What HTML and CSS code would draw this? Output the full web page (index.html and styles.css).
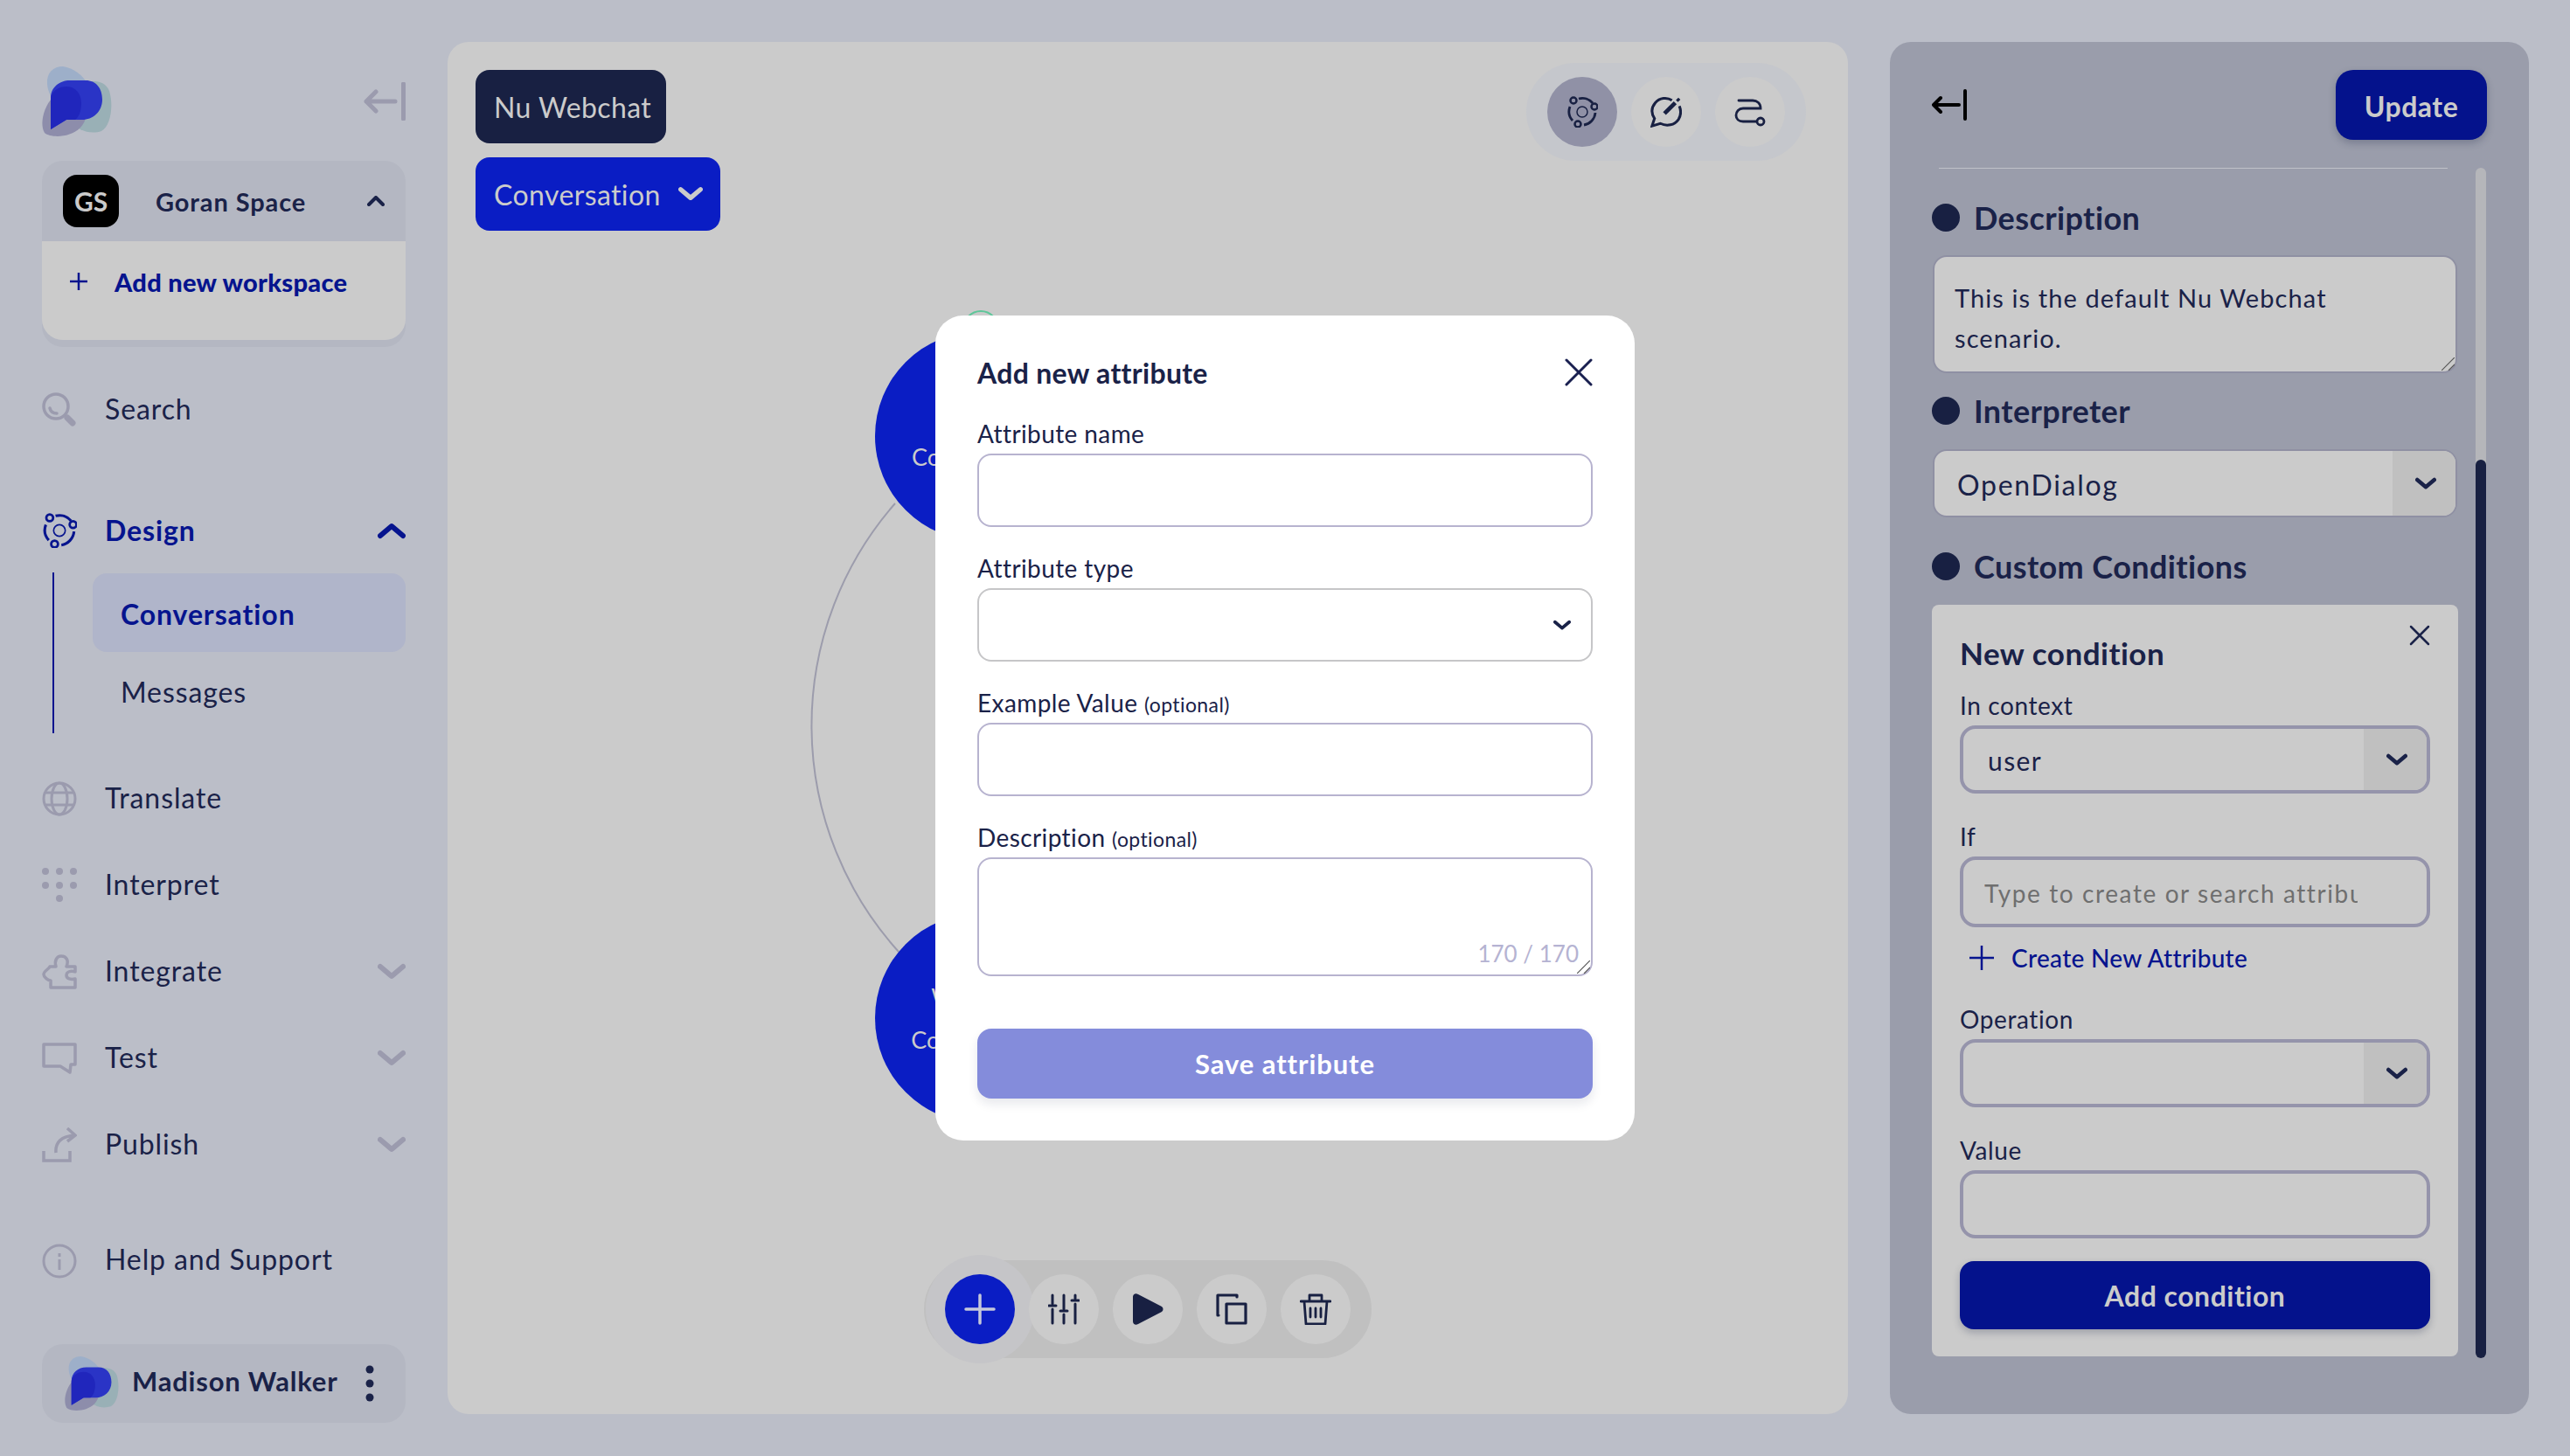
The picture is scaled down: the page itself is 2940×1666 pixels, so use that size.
FILE: index.html
```html
<!doctype html>
<html lang="en">
<head>
    <meta charset="utf-8">
    <meta name="viewport" content="width=device-width, initial-scale=1">
    <title>Nu Webchat - Conversation</title>
    <link rel="stylesheet" href="styles.css">
</head>
<body>
    <svg class="defs" width="0" height="0" aria-hidden="true">
        <symbol id="logo" viewBox="0 0 80 80">
            <path fill="#9dafc9" d="M6 20C5 7 13 0 24 0C36 2 47 10 52 20C58 34 40 44 26 44C14 44 7 32 6 20Z"/>
            <path fill="#99b0b6" d="M48 18C60 16 72 16 77 28C82 44 79 68 68 74C56 78 40 74 34 62C28 46 36 22 48 18Z"/>
            <path fill="#8d8dab" d="M12 36C22 26 38 24 46 34C54 46 52 62 44 70C32 82 10 82 3 76C-3 66 2 46 12 36Z"/>
            <path fill="#2a34c6" d="M10 72V36C10 24 20 16 32 16H50C62 16 69 25 69 38C69 52 58 61 46 61H28Z"/>
            <path fill="#2026bc" d="M10 72V36C12 27 20 23 28 23C39 23 45 32 45 42C45 52 42 58 38 61H28Z"/>
        </symbol>
        <symbol id="orbit" viewBox="0 0 36 36">
            <g fill="none" stroke="currentColor">
                <circle cx="18" cy="18" r="6" stroke-width="1.5"/>
                <path stroke-width="2.8" d="M4 12A15.500 15.500 0 0 0 7 28M14 3A15.500 15.500 0 0 1 30 8M33 19A15.500 15.500 0 0 1 20 33"/>
                <circle cx="8" cy="5" r="3.500" stroke-width="2.500"/>
                <circle cx="32" cy="12" r="3.500" stroke-width="2.500"/>
                <circle cx="13" cy="32" r="3.500" stroke-width="2.500"/>
            </g>
        </symbol>
        <symbol id="chevron" viewBox="0 0 32 20">
            <path fill="none" stroke="currentColor" stroke-width="6" stroke-linecap="round" stroke-linejoin="round" d="M3 4L16 15L29 4"/>
        </symbol>
        <symbol id="grip" viewBox="0 0 15 15">
            <path fill="none" stroke="#555" stroke-width="1.200" d="M0 15L15 0M8 15L15 8"/>
        </symbol>
    </svg>

    <aside class="sidebar">
        <div class="brand-row">
            <svg class="brand-logo"><use href="#logo"/></svg>
            <svg class="collapse-icon" viewBox="0 0 48 44" fill="none" stroke="currentColor" stroke-width="5" stroke-linecap="round" stroke-linejoin="round">
                <path d="M36 22H3M14 11L3 22L14 33M45.500 2V42"/>
            </svg>
        </div>

        <div class="workspace">
            <div class="workspace-head">
                <span class="workspace-badge">GS</span>
                <span class="workspace-name">Goran Space</span>
                <svg class="workspace-chevron" viewBox="0 0 20 12" fill="none" stroke="currentColor" stroke-width="4" stroke-linecap="round" stroke-linejoin="round"><path d="M2 10L10 2L18 10"/></svg>
            </div>
            <div class="workspace-body">
                <svg class="workspace-plus" viewBox="0 0 20 20" stroke="currentColor" stroke-width="2.500"><path d="M0 10H20M10 0V20"/></svg>
                <span>Add new workspace</span>
            </div>
        </div>

        <nav class="nav">
            <a class="nav-row nav-search">
                <svg class="nav-icon" viewBox="0 0 40 40" fill="none" stroke="currentColor" stroke-width="3.500" stroke-linecap="round">
                    <circle cx="16" cy="16" r="14"/>
                    <path d="M9 18C10 22 13 24 17 24"/>
                    <path stroke-width="7" d="M29 29L35 35"/>
                </svg>
                <span>Search</span>
            </a>

            <a class="nav-row nav-design">
                <svg class="nav-icon"><use href="#orbit"/></svg>
                <span>Design</span>
                <svg class="nav-chevron flip"><use href="#chevron"/></svg>
            </a>
            <div class="subnav">
                <a class="subnav-item is-active">Conversation</a>
                <a class="subnav-item">Messages</a>
            </div>

            <a class="nav-row nav-translate">
                <svg class="nav-icon" viewBox="0 0 40 40" fill="none" stroke="currentColor" stroke-width="3">
                    <circle cx="20" cy="20" r="18"/>
                    <ellipse cx="20" cy="20" rx="9" ry="18"/>
                    <path d="M3 13H37M3 27H37"/>
                </svg>
                <span>Translate</span>
            </a>
            <a class="nav-row">
                <svg class="nav-icon" viewBox="0 0 40 40" fill="currentColor">
                    <circle cx="4" cy="4" r="4"/><circle cx="20" cy="4" r="4"/><circle cx="36" cy="4" r="4"/>
                    <circle cx="4" cy="20" r="4"/><circle cx="20" cy="20" r="4"/><circle cx="36" cy="20" r="4"/>
                    <circle cx="20" cy="35" r="4"/>
                </svg>
                <span>Interpret</span>
            </a>
            <a class="nav-row">
                <svg class="nav-icon" viewBox="0 0 40 40" fill="none" stroke="currentColor" stroke-width="3.500" stroke-linejoin="round">
                    <path d="M9 14H16C14 7 17 2 22 2C28 2 31 7 28 14H38V20C33 18 28 20 28 24C28 28 33 29 38 28V38H10V30C7 30 2 26 2 23C2 19 8 17 9 14Z"/>
                </svg>
                <span>Integrate</span>
                <svg class="nav-chevron"><use href="#chevron"/></svg>
            </a>
            <a class="nav-row">
                <svg class="nav-icon" viewBox="0 0 40 40" fill="none" stroke="currentColor" stroke-width="3.500" stroke-linejoin="round">
                    <path d="M2 4H38V27H33L32 36L21 29H2Z"/>
                </svg>
                <span>Test</span>
                <svg class="nav-chevron"><use href="#chevron"/></svg>
            </a>
            <a class="nav-row">
                <svg class="nav-icon" viewBox="0 0 40 40" fill="none" stroke="currentColor" stroke-width="3.500">
                    <path d="M2 27V38H32V27M16 29C15 17 22 10 38 9M29 1L38 9L29 16"/>
                </svg>
                <span>Publish</span>
                <svg class="nav-chevron"><use href="#chevron"/></svg>
            </a>
            <a class="nav-row nav-help">
                <svg class="nav-icon" viewBox="0 0 40 40" fill="none" stroke="currentColor" stroke-width="3">
                    <circle cx="20" cy="20" r="18"/>
                    <path d="M20 18V30M20 11V15"/>
                </svg>
                <span>Help and Support</span>
            </a>
        </nav>

        <div class="user-card">
            <svg class="user-logo"><use href="#logo"/></svg>
            <span class="user-name">Madison Walker</span>
            <svg class="user-menu" viewBox="0 0 10 42" fill="currentColor"><circle cx="5" cy="5" r="4.500"/><circle cx="5" cy="21" r="4.500"/><circle cx="5" cy="37" r="4.500"/></svg>
        </div>
    </aside>

    <main class="canvas">
        <!-- diagram lies under everything else, coords are canvas px -->
        <svg class="diagram" width="1602" height="1570" fill="none">
            <circle cx="610" cy="328" r="20" stroke="#5fc79a" stroke-width="2"/>
            <path stroke="#9c9cac" stroke-width="2" d="M512 528A386 386 0 0 0 516 1041"/>
        </svg>
        <div class="node node-top">
            <span class="node-start">Co</span>
        </div>
        <div class="node node-bottom">
            <span>Welcome</span>
            <span>Conversation</span>
        </div>

        <header class="canvas-head">
            <div class="crumbs">
                <span class="crumb crumb-dark">Nu Webchat</span>
                <span class="crumb crumb-blue">Conversation
                    <svg class="crumb-chevron"><use href="#chevron"/></svg>
                </span>
            </div>
            <div class="pill pill-views">
                <span class="round is-current"><svg class="view-icon"><use href="#orbit"/></svg></span>
                <span class="round">
                    <svg class="view-icon" viewBox="0 0 38 38" fill="none" stroke="currentColor" stroke-width="3.200">
                        <path d="M26 5C20 1 11 2 6 8C1 14 1 21 5 27L2 36L12 33C20 37 29 35 34 28C37 23 37 17 35 12"/>
                        <path stroke-width="5" d="M17 21L30 8"/>
                        <path stroke-width="3.500" d="M32 6L35 3"/>
                    </svg>
                </span>
                <span class="round">
                    <svg class="view-icon" viewBox="0 0 36 36" fill="none" stroke="currentColor" stroke-width="2.800" stroke-linecap="round">
                        <path d="M5 5H21C26 5 30 8 30 14H10C5 14 2 18 2 22C2 26 5 29 10 29H25"/>
                        <circle cx="30" cy="29" r="4"/>
                    </svg>
                </span>
            </div>
        </header>

        <div class="pill pill-tools">
            <span class="round round-add">
                <svg class="tool-icon" viewBox="0 0 36 36" stroke="currentColor" stroke-width="3.500" stroke-linecap="round"><path d="M2 18H34M18 2V34"/></svg>
            </span>
            <span class="round">
                <svg class="tool-icon" viewBox="0 0 36 36" fill="none" stroke="currentColor" stroke-width="3" stroke-linecap="round">
                    <path d="M5 2V12M5 18V34M18 2V18M18 24V34M31 2V6M31 12V34"/>
                    <path d="M1 14H9M14 20H22M27 8H35"/>
                </svg>
            </span>
            <span class="round">
                <svg class="tool-icon" viewBox="0 0 36 36" fill="currentColor"><path d="M1 4C1 1 4 -1 7 1L34 15C36 16.500 36 19.500 34 21L7 35C4 37 1 35 1 32Z"/></svg>
            </span>
            <span class="round">
                <svg class="tool-icon" viewBox="0 0 36 36" fill="none" stroke="currentColor" stroke-width="3.200" stroke-linecap="round" stroke-linejoin="round">
                    <path d="M3 25H2V2H24V4"/>
                    <rect x="12" y="12" width="22" height="22"/>
                </svg>
            </span>
            <span class="round">
                <svg class="tool-icon" viewBox="0 0 36 36" fill="none" stroke="currentColor" stroke-width="2.800" stroke-linecap="round" stroke-linejoin="round">
                    <path d="M1 9H35M11 8V2H25V8M5 9L7 35H29L31 9M12 17V27M18 17V27M24 17V27"/>
                </svg>
            </span>
        </div>

        <form class="modal">
            <div class="modal-head">
                <h2 class="modal-title">Add new attribute</h2>
                <svg class="modal-close" viewBox="0 0 32 32" stroke="currentColor" stroke-width="3" stroke-linecap="round"><path d="M2 2L30 30M30 2L2 30"/></svg>
            </div>
            <label class="modal-label">Attribute name</label>
            <input class="modal-input" type="text">
            <label class="modal-label">Attribute type</label>
            <div class="modal-input modal-select">
                <svg class="modal-chevron"><use href="#chevron"/></svg>
            </div>
            <label class="modal-label">Example Value <small>(optional)</small></label>
            <input class="modal-input" type="text">
            <label class="modal-label">Description <small>(optional)</small></label>
            <div class="modal-area">
                <textarea class="modal-input modal-textarea"></textarea>
                <span class="modal-count">170 / 170</span>
                <svg class="grip grip-modal"><use href="#grip"/></svg>
            </div>
            <button class="modal-save" type="button">Save attribute</button>
        </form>
    </main>

    <section class="panel">
        <div class="panel-head">
            <svg class="panel-back" viewBox="0 0 40 36" fill="none" stroke="currentColor" stroke-width="4" stroke-linecap="round" stroke-linejoin="round"><path d="M31 18H2M10 10L2 18L10 26M38 2V34"/></svg>
            <button class="btn-update" type="button">Update</button>
        </div>
        <div class="panel-body">
            <div class="panel-content">
                <hr class="panel-rule">
                <h3 class="section-title section-first">Description</h3>
                <div class="panel-area-wrap">
                    <textarea class="panel-area">This is the default Nu Webchat scenario.</textarea>
                    <svg class="grip grip-panel"><use href="#grip"/></svg>
                </div>
                <h3 class="section-title section-second">Interpreter</h3>
                <div class="panel-select">
                    <span class="panel-select-value">OpenDialog</span>
                    <span class="panel-select-arrow"><svg class="select-chevron"><use href="#chevron"/></svg></span>
                </div>
                <h3 class="section-title section-third">Custom Conditions</h3>

                <div class="condition">
                    <div class="condition-head">
                        <h4 class="condition-title">New condition</h4>
                        <svg class="condition-close" viewBox="0 0 24 24" stroke="currentColor" stroke-width="2.500" stroke-linecap="round"><path d="M2 2L22 22M22 2L2 22"/></svg>
                    </div>
                    <div class="condition-field field-first">
                        <label class="condition-label">In context</label>
                        <div class="condition-select">
                            <span class="condition-value">user</span>
                            <span class="condition-arrow"><svg class="select-chevron"><use href="#chevron"/></svg></span>
                        </div>
                    </div>
                    <div class="condition-field">
                        <label class="condition-label">If</label>
                        <input class="condition-input condition-search" type="text" placeholder="Type to create or search attributes">
                        <a class="create-link">
                            <svg class="create-plus" viewBox="0 0 28 28" stroke="currentColor" stroke-width="2.500"><path d="M0 14H28M14 0V28"/></svg>
                            Create New Attribute
                        </a>
                    </div>
                    <div class="condition-field field-after-link">
                        <label class="condition-label">Operation</label>
                        <div class="condition-select">
                            <span class="condition-value"></span>
                            <span class="condition-arrow"><svg class="select-chevron"><use href="#chevron"/></svg></span>
                        </div>
                    </div>
                    <div class="condition-field">
                        <label class="condition-label">Value</label>
                        <input class="condition-input" type="text">
                    </div>
                    <button class="btn-condition" type="button">Add condition</button>
                </div>
            </div>
            <div class="scrollbar"><div class="scrollbar-thumb"></div></div>
        </div>
    </section>
</body>
</html>
```

FILE: styles.css
```css
/*
 * Reset
 */

*,
*::before,
*::after {
    box-sizing: border-box;
    margin: 0;
    padding: 0;
}

body {
    background-color: #bbbec8;
    color: #1a2248;
    display: flex;
    font-family: "Lato", "Open Sans", sans-serif;
    gap: 48px;
    height: 1666px;
    overflow: hidden;
    padding: 48px 48px 0;
    width: 2940px;
}

h2, h3, h4 {
    font-weight: 700;
}

svg {
    display: block;
    flex: none;
}

textarea {
    resize: none;
}

.defs {
    position: absolute;
}

/*
 * Sidebar
 */

.sidebar {
    flex: none;
    width: 416px;
}

.brand-row {
    align-items: center;
    display: flex;
    justify-content: space-between;
    margin-bottom: 28px;
    padding-top: 28px;
}

.brand-logo {
    height: 80px;
    width: 80px;
}

.collapse-icon {
    color: #9b9bae;
    height: 44px;
    width: 48px;
}

.workspace {
    border-radius: 24px;
    box-shadow: 0 8px 0 #b4b7c2;
}

.workspace-head {
    align-items: center;
    background-color: #b4b7c2;
    border-radius: 24px 24px 0 0;
    display: flex;
    height: 92px;
    padding: 0 24px;
}

.workspace-badge {
    align-items: center;
    background-color: #000;
    border-radius: 16px;
    color: #cbcbcb;
    display: flex;
    font-size: 30px;
    font-weight: 700;
    height: 60px;
    justify-content: center;
    width: 64px;
}

.workspace-name {
    font-size: 29px;
    font-weight: 700;
    letter-spacing: 0.9px;
    margin-left: 42px;
}

.workspace-chevron {
    height: 12px;
    margin-left: auto;
    width: 20px;
}

.workspace-body {
    align-items: center;
    background-color: #cbcbcb;
    border-radius: 0 0 24px 24px;
    color: #06148e;
    display: flex;
    font-size: 29px;
    font-weight: 900;
    gap: 31px;
    height: 113px;
    letter-spacing: 0.3px;
    padding: 0 32px 21px;
}

.workspace-plus {
    height: 20px;
    width: 20px;
}

.nav {
    display: flex;
    flex-direction: column;
    font-size: 32px;
    letter-spacing: 0.9px;
}

.nav-row {
    align-items: center;
    display: flex;
    gap: 32px;
    height: 60px;
    margin-top: 39px;
}

.nav-row span {
    padding-bottom: 4px;
}

.nav-search {
    margin-top: 50px;
}

.nav-design {
    color: #06148e;
    font-weight: 700;
    margin-top: 78px;
}

.nav-design span {
    padding-bottom: 1px;
}

.nav-translate {
    margin-top: 45px;
}

.nav-help {
    margin-top: 73px;
}

.nav-help span {
    padding-bottom: 6px;
}

.nav-icon {
    color: #9b9bae;
    height: 40px;
    width: 40px;
}

.nav-design .nav-icon {
    color: #06148e;
}

.nav-chevron {
    color: #9b9bae;
    height: 20px;
    margin-left: auto;
    width: 32px;
}

.nav-design .nav-chevron {
    color: #06148e;
}

.flip {
    transform: scaleY(-1);
}

.subnav {
    border-left: 2px solid #06148e;
    height: 184px;
    margin: 18px 0 0 12px;
    padding: 1px 0 0 44px;
}

.subnav-item {
    align-items: center;
    border-radius: 16px;
    display: flex;
    height: 90px;
    padding: 0 0 3px 32px;
}

.subnav-item + .subnav-item {
    margin-top: 2px;
}

.subnav-item.is-active {
    background-color: #b0b5ca;
    color: #06148e;
    font-weight: 700;
    padding: 3px 0 0 32px;
}

.user-card {
    align-items: center;
    background-color: #b4b7c2;
    border-radius: 24px;
    display: flex;
    height: 90px;
    margin-top: 65px;
    padding: 0 36px 0 26px;
}

.user-logo {
    height: 62px;
    width: 62px;
}

.user-name {
    font-size: 31px;
    font-weight: 700;
    letter-spacing: 0.8px;
    margin-left: 15px;
    padding-bottom: 6px;
}

.user-menu {
    height: 42px;
    margin-left: auto;
    width: 10px;
}

/*
 * Canvas
 */

.canvas {
    background-color: #cbcbcb;
    border-radius: 24px;
    display: flex;
    flex: none;
    flex-direction: column;
    height: 1570px;
    justify-content: space-between;
    padding: 24px 48px 64px;
    position: relative;
    width: 1602px;
}

.diagram {
    left: 0;
    position: absolute;
    top: 0;
}

.node {
    align-items: center;
    background-color: #0a1dc4;
    border-radius: 50%;
    color: #cbcbcb;
    display: flex;
    flex-direction: column;
    font-size: 27px;
    gap: 16px;
    height: 240px;
    justify-content: center;
    left: 489px;
    position: absolute;
    width: 240px;
}

.node-top {
    padding-top: 46px;
    top: 331px;
}

.node-bottom {
    top: 997px;
}

/* only the start of this label shows beside the modal */
.node-start {
    align-self: flex-start;
    margin-left: 42px;
}

.canvas-head {
    align-items: flex-start;
    display: flex;
    justify-content: space-between;
    position: relative;
}

.crumbs {
    align-items: flex-start;
    display: flex;
    flex-direction: column;
    gap: 16px;
    margin: 8px 0 0 -16px;
}

.crumb {
    align-items: center;
    border-radius: 16px;
    color: #cbcbcb;
    display: flex;
    font-size: 32px;
    height: 84px;
    letter-spacing: 0.4px;
    padding: 0 20px 0 21px;
}

.crumb-dark {
    background-color: #182042;
    padding-right: 17px;
}

.crumb-blue {
    background-color: #0a1dc4;
    gap: 20px;
}

.crumb-chevron {
    height: 18px;
    width: 28px;
}

.pill {
    border-radius: 56px;
    display: flex;
    gap: 16px;
    height: 112px;
    padding: 16px 24px;
}

.pill-views {
    background-color: #c5c7cc;
}

.pill-tools {
    align-self: center;
    background-color: #c0c0c0;
    position: relative;
}

.round {
    align-items: center;
    background-color: #cbcbcb;
    border-radius: 50%;
    color: #182042;
    display: flex;
    height: 80px;
    justify-content: center;
    position: relative;
    width: 80px;
}

.round.is-current {
    background-color: #9091a6;
}

.round-add {
    background-color: #0a1dc4;
    box-shadow: 0 0 0 22px #c5c5c8;
    color: #c5c8da;
}

.view-icon,
.tool-icon {
    height: 36px;
    width: 36px;
}

/*
 * Modal
 */

.modal {
    background-color: #fff;
    border-radius: 32px;
    display: flex;
    flex-direction: column;
    height: 944px;
    left: 558px;
    padding: 44px 48px 0;
    position: absolute;
    top: 313px;
    width: 800px;
}

.modal-head {
    align-items: center;
    display: flex;
    height: 44px;
    justify-content: space-between;
    margin-bottom: 31px;
}

.modal-title {
    font-size: 32px;
    letter-spacing: 0.3px;
    padding-bottom: 2px;
}

.modal-close {
    color: #1a2050;
    height: 32px;
    margin-top: -2px;
    width: 32px;
}

.modal-label {
    font-size: 28px;
    height: 36px;
    letter-spacing: 0.4px;
    line-height: 33px;
    margin-bottom: 3px;
}

.modal-label small {
    font-size: 23px;
}

.modal-input {
    background-color: #fff;
    border: 2px solid #b7b3cf;
    border-radius: 16px;
    display: block;
    flex: none;
    height: 84px;
    margin-bottom: 31px;
    width: 100%;
}

.modal-select {
    align-items: center;
    border-color: #c6c6c8;
    display: flex;
    justify-content: flex-end;
    padding-right: 23px;
}

.modal-chevron {
    color: #1a2248;
    height: 13px;
    width: 20px;
}

.modal-area {
    position: relative;
}

.modal-textarea {
    height: 136px;
    margin-bottom: 60px;
}

.modal-count {
    bottom: 70px;
    color: #b5b3d2;
    font-size: 26px;
    position: absolute;
    right: 16px;
}

.grip {
    height: 15px;
    position: absolute;
    width: 15px;
}

.grip-modal {
    bottom: 63px;
    right: 3px;
}

.modal-save {
    background-color: #848cdb;
    border: 0;
    border-radius: 16px;
    box-shadow: 0 6px 12px rgba(24, 32, 66, 0.1);
    color: #fff;
    font-family: inherit;
    font-size: 31px;
    font-weight: 700;
    height: 80px;
    letter-spacing: 0.9px;
}

/*
 * Right panel
 */

.panel {
    background-color: #9a9dab;
    border-radius: 24px;
    flex: none;
    height: 1570px;
    padding: 32px 48px 0;
    width: 731px;
}

.panel-head {
    align-items: center;
    display: flex;
    height: 80px;
    justify-content: space-between;
    margin-bottom: 32px;
}

.panel-back {
    color: #000;
    height: 36px;
    width: 40px;
}

.btn-update {
    background-color: #04128c;
    border: 0;
    border-radius: 20px;
    box-shadow: 0 4px 8px rgba(24, 32, 66, 0.25);
    color: #cbcbcb;
    font-family: inherit;
    font-size: 32px;
    font-weight: 700;
    height: 80px;
    letter-spacing: 0.5px;
    padding-top: 2px;
    width: 173px;
}

.panel-body {
    display: flex;
    gap: 20px;
    height: 1362px;
}

.panel-content {
    width: 602px;
}

.panel-rule {
    background-color: #c0c2c8;
    border: 0;
    height: 1px;
    margin: 0 12px 0 8px;
}

.section-title {
    align-items: center;
    display: flex;
    font-size: 36px;
    gap: 16px;
    height: 40px;
    letter-spacing: 0.4px;
}

.section-title::before {
    background-color: #182042;
    border-radius: 50%;
    content: "";
    height: 32px;
    width: 32px;
}

.section-first {
    margin-top: 36px;
}

.section-second {
    margin-top: 23px;
}

.section-third {
    margin-top: 36px;
}

.panel-area-wrap {
    margin: 23px 1px 0;
    position: relative;
}

.panel-area {
    background-color: #cbcbcb;
    border: 2px solid #8f90a3;
    border-radius: 16px;
    color: #1a2248;
    display: block;
    font-family: inherit;
    font-size: 29px;
    height: 135px;
    letter-spacing: 1.1px;
    line-height: 46px;
    padding: 24px 100px 0 23px;
    width: 600px;
}

.grip-panel {
    bottom: 3px;
    right: 3px;
}

.panel-select {
    background-color: #cbcbcb;
    border: 2px solid #8f90a3;
    border-radius: 16px;
    display: flex;
    font-size: 32px;
    height: 78px;
    letter-spacing: 1.7px;
    margin: 24px 1px 0;
    overflow: hidden;
}

.panel-select-value {
    align-self: center;
    flex: 1;
    padding: 2px 0 0 26px;
}

.panel-select-arrow,
.condition-arrow {
    align-items: center;
    background-color: #c0c0c0;
    display: flex;
    justify-content: center;
    padding-left: 4px;
    width: 72px;
}

.select-chevron {
    color: #1a2248;
    height: 15px;
    width: 24px;
}

.condition {
    background-color: #cbcbcb;
    border-radius: 8px;
    height: 860px;
    margin-top: 24px;
    padding: 34px 32px 0;
}

.condition-head {
    align-items: flex-start;
    display: flex;
    height: 44px;
    justify-content: space-between;
}

.condition-title {
    font-size: 35px;
    letter-spacing: 0.5px;
    line-height: 42px;
}

.condition-close {
    color: #1a2248;
    height: 24px;
    margin-top: -11px;
    width: 24px;
}

.condition-field {
    margin-top: 31px;
}

.field-first {
    margin-top: 19px;
}

.field-after-link {
    margin-top: 34px;
}

.condition-label {
    display: block;
    font-size: 28px;
    height: 36px;
    letter-spacing: 0.6px;
    line-height: 36px;
    margin-bottom: 5px;
}

.condition-select {
    background-color: #cbcbcb;
    border: 4px solid #9594ab;
    border-radius: 18px;
    display: flex;
    font-size: 30px;
    height: 78px;
    letter-spacing: 1.4px;
    overflow: hidden;
}

.condition-value {
    align-self: center;
    flex: 1;
    padding: 2px 0 0 28px;
}

.condition-input {
    background-color: #cbcbcb;
    border: 4px solid #9594ab;
    border-radius: 18px;
    display: block;
    font-family: inherit;
    font-size: 28px;
    height: 78px;
    letter-spacing: 1.6px;
    width: 100%;
}

.condition-search {
    height: 81px;
    padding: 2px 79px 0 24px;
}

.condition-search::placeholder {
    color: #6f6f6f;
    opacity: 1;
}

.create-link {
    align-items: center;
    color: #06148e;
    display: flex;
    font-size: 28px;
    font-weight: 500;
    gap: 20px;
    height: 36px;
    letter-spacing: 0.3px;
    margin-top: 17px;
    padding-left: 11px;
}

.create-plus {
    height: 28px;
    width: 28px;
}

.btn-condition {
    background-color: #04128c;
    border: 0;
    border-radius: 16px;
    box-shadow: 0 4px 8px rgba(24, 32, 66, 0.25);
    color: #cbcbcb;
    font-family: inherit;
    font-size: 32px;
    font-weight: 700;
    height: 78px;
    letter-spacing: 0.5px;
    margin-top: 26px;
    width: 100%;
}

.scrollbar {
    background-color: #b5b6ba;
    border-radius: 6px;
    display: flex;
    flex-direction: column;
    justify-content: flex-end;
    width: 12px;
}

.scrollbar-thumb {
    background-color: #182042;
    border-radius: 6px;
    height: 1028px;
}
```
